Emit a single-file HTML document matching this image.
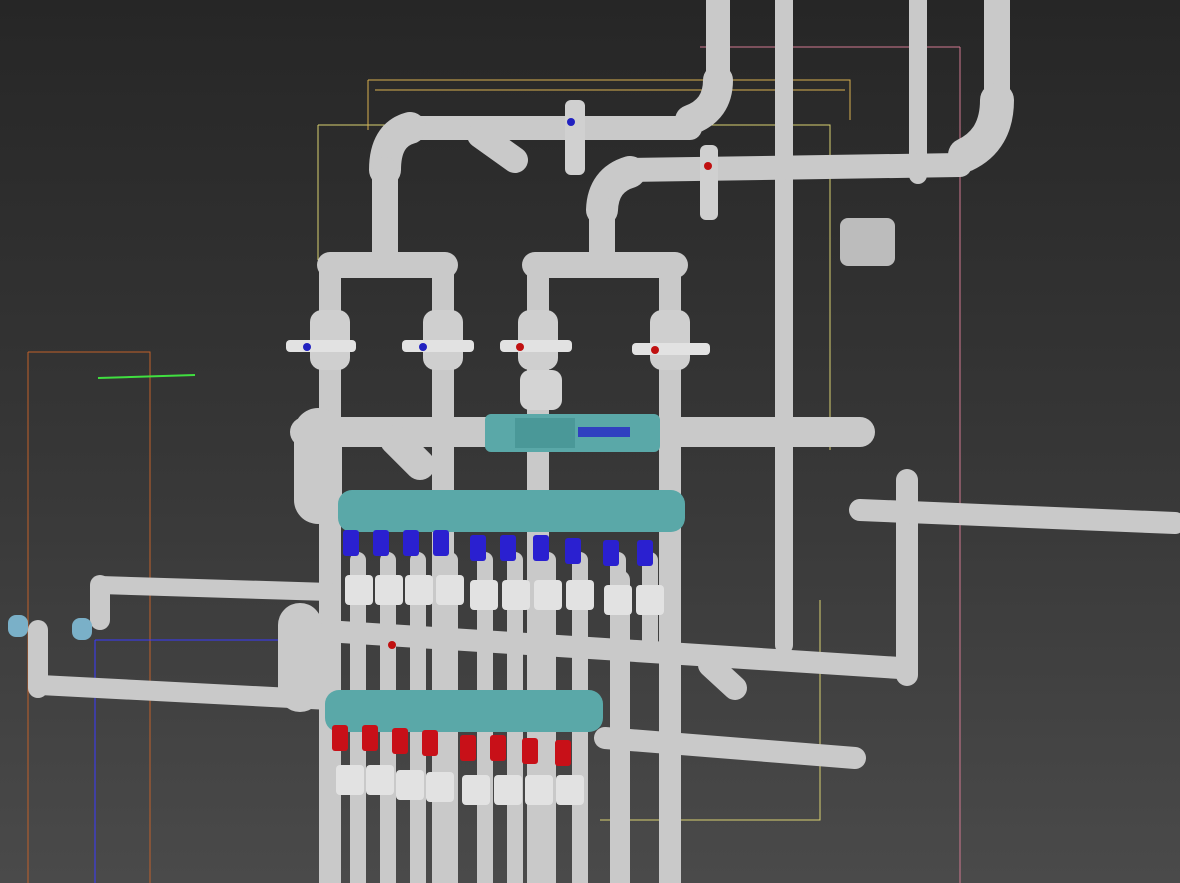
<!DOCTYPE html>
<html><head><meta charset="utf-8"><style>
html,body{margin:0;padding:0;width:1180px;height:883px;overflow:hidden;background:#333}
svg{display:block}
</style></head><body>
<svg width="1180" height="883" viewBox="0 0 1180 883" xmlns="http://www.w3.org/2000/svg">
<defs>
<linearGradient id="bg" x1="0" y1="0" x2="0" y2="1">
<stop offset="0" stop-color="#262626"/><stop offset="0.5" stop-color="#363636"/><stop offset="1" stop-color="#4a4a4a"/>
</linearGradient>
</defs>
<rect width="1180" height="883" fill="url(#bg)"/>
<g fill="none" stroke-width="1">
<path d="M28 352 H150 V883 M28 352 V883" stroke="#c0602a"/>
<path d="M95 640 V883 M95 640 H330" stroke="#3a3aff"/>
<path d="M318 125 H830 V450 M318 125 V260" stroke="#d8d070"/>
<path d="M368 80 H850 V120 M368 80 V130 M375 90 H845" stroke="#d8b050"/>
<path d="M960 47 V883 M700 47 H960" stroke="#d07890"/>
<path d="M600 820 H820 V700 M820 600 V720" stroke="#d8d070"/>
<path d="M98 378 L195 375" stroke="#40e040" stroke-width="2"/>
</g>
<g stroke="#c9c9c9" stroke-linecap="round" fill="none">
<line x1="718" y1="0" x2="718" y2="80" stroke-width="24"/>
<line x1="784" y1="0" x2="784" y2="645" stroke-width="18"/>
<line x1="918" y1="0" x2="918" y2="175" stroke-width="18"/>
<line x1="997" y1="0" x2="997" y2="100" stroke-width="26"/>
<path d="M718 80 Q718 110 690 120" stroke-width="30"/>
<path d="M997 100 Q997 140 965 155" stroke-width="34"/>
<line x1="410" y1="128" x2="690" y2="128" stroke-width="24"/>
<line x1="630" y1="170" x2="960" y2="165" stroke-width="24"/>
<path d="M410 128 Q385 135 385 170" stroke-width="32"/>
<path d="M630 172 Q603 180 602 210" stroke-width="32"/>
<line x1="385" y1="170" x2="385" y2="260" stroke-width="26"/>
<line x1="602" y1="210" x2="602" y2="255" stroke-width="26"/>
<line x1="480" y1="135" x2="515" y2="160" stroke-width="26"/>
<line x1="330" y1="265" x2="445" y2="265" stroke-width="26"/>
<line x1="535" y1="265" x2="675" y2="265" stroke-width="26"/>
<line x1="330" y1="265" x2="330" y2="883" stroke-width="22"/>
<line x1="443" y1="265" x2="443" y2="883" stroke-width="22"/>
<line x1="538" y1="265" x2="538" y2="883" stroke-width="22"/>
<line x1="670" y1="265" x2="670" y2="883" stroke-width="22"/>
<line x1="620" y1="580" x2="620" y2="883" stroke-width="20"/>
<rect x="310" y="310" width="40" height="60" rx="12" fill="#cfcfcf" stroke="none"/>
<rect x="423" y="310" width="40" height="60" rx="12" fill="#cfcfcf" stroke="none"/>
<rect x="518" y="310" width="40" height="60" rx="12" fill="#cfcfcf" stroke="none"/>
<rect x="650" y="310" width="40" height="60" rx="12" fill="#cfcfcf" stroke="none"/>
<line x1="305" y1="432" x2="860" y2="432" stroke-width="30"/>
<line x1="395" y1="440" x2="420" y2="465" stroke-width="30"/>
<line x1="710" y1="665" x2="735" y2="688" stroke-width="24"/>
<path d="M318 432 V500" stroke-width="48"/>
<line x1="100" y1="585" x2="330" y2="592" stroke-width="18"/>
<line x1="100" y1="585" x2="100" y2="620" stroke-width="20"/>
<line x1="40" y1="685" x2="330" y2="700" stroke-width="20"/>
<line x1="38" y1="630" x2="38" y2="688" stroke-width="20"/>
<line x1="310" y1="630" x2="900" y2="668" stroke-width="22"/>
<line x1="907" y1="480" x2="907" y2="675" stroke-width="22"/>
<line x1="860" y1="510" x2="1175" y2="523" stroke-width="22"/>
<line x1="605" y1="738" x2="855" y2="758" stroke-width="22"/>
<path d="M300 625 V690" stroke-width="44"/>
<g stroke-width="16">
<line x1="358" y1="560" x2="358" y2="883"/><line x1="388" y1="560" x2="388" y2="883"/>
<line x1="418" y1="560" x2="418" y2="883"/><line x1="450" y1="560" x2="450" y2="883"/>
<line x1="485" y1="560" x2="485" y2="883"/><line x1="515" y1="560" x2="515" y2="883"/>
<line x1="548" y1="560" x2="548" y2="883"/><line x1="580" y1="560" x2="580" y2="883"/>
<line x1="618" y1="560" x2="618" y2="883"/><line x1="650" y1="560" x2="650" y2="650"/>
</g>
</g>
<g fill="#e2e2e2">
<rect x="345" y="575" width="28" height="30" rx="4"/><rect x="375" y="575" width="28" height="30" rx="4"/>
<rect x="405" y="575" width="28" height="30" rx="4"/><rect x="436" y="575" width="28" height="30" rx="4"/>
<rect x="470" y="580" width="28" height="30" rx="4"/><rect x="502" y="580" width="28" height="30" rx="4"/>
<rect x="534" y="580" width="28" height="30" rx="4"/><rect x="566" y="580" width="28" height="30" rx="4"/>
<rect x="604" y="585" width="28" height="30" rx="4"/><rect x="636" y="585" width="28" height="30" rx="4"/>
<rect x="336" y="765" width="28" height="30" rx="4"/><rect x="366" y="765" width="28" height="30" rx="4"/>
<rect x="396" y="770" width="28" height="30" rx="4"/><rect x="426" y="772" width="28" height="30" rx="4"/>
<rect x="462" y="775" width="28" height="30" rx="4"/><rect x="494" y="775" width="28" height="30" rx="4"/>
<rect x="525" y="775" width="28" height="30" rx="4"/><rect x="556" y="775" width="28" height="30" rx="4"/>
<rect x="286" y="340" width="70" height="12" rx="4"/><rect x="402" y="340" width="72" height="12" rx="4"/>
<rect x="500" y="340" width="72" height="12" rx="4"/><rect x="632" y="343" width="78" height="12" rx="4"/>
<rect x="520" y="370" width="42" height="40" rx="10" fill="#d4d4d4"/>
<rect x="840" y="218" width="55" height="48" rx="8" fill="#bcbcbc"/>
<rect x="565" y="100" width="20" height="75" rx="6" fill="#d0d0d0"/>
<rect x="700" y="145" width="18" height="75" rx="6" fill="#d0d0d0"/>
</g>
<g fill="#5aa8a8">
<rect x="485" y="414" width="175" height="38" rx="6"/>
<rect x="338" y="490" width="347" height="42" rx="14"/>
<rect x="325" y="690" width="278" height="42" rx="14"/>
<rect x="8" y="615" width="20" height="22" rx="8" fill="#7ab0c8"/>
<rect x="72" y="618" width="20" height="22" rx="8" fill="#7ab0c8"/>
</g>
<rect x="515" y="418" width="60" height="30" fill="#4a9898"/>
<rect x="578" y="427" width="52" height="10" fill="#3040c0"/>
<g fill="#2a20d0">
<rect x="343" y="530" width="16" height="26" rx="3"/><rect x="373" y="530" width="16" height="26" rx="3"/>
<rect x="403" y="530" width="16" height="26" rx="3"/><rect x="433" y="530" width="16" height="26" rx="3"/>
<rect x="470" y="535" width="16" height="26" rx="3"/><rect x="500" y="535" width="16" height="26" rx="3"/>
<rect x="533" y="535" width="16" height="26" rx="3"/><rect x="565" y="538" width="16" height="26" rx="3"/>
<rect x="603" y="540" width="16" height="26" rx="3"/><rect x="637" y="540" width="16" height="26" rx="3"/>
</g>
<g fill="#c81018">
<rect x="332" y="725" width="16" height="26" rx="3"/><rect x="362" y="725" width="16" height="26" rx="3"/>
<rect x="392" y="728" width="16" height="26" rx="3"/><rect x="422" y="730" width="16" height="26" rx="3"/>
<rect x="460" y="735" width="16" height="26" rx="3"/><rect x="490" y="735" width="16" height="26" rx="3"/>
<rect x="522" y="738" width="16" height="26" rx="3"/><rect x="555" y="740" width="16" height="26" rx="3"/>
</g>
<g>
<circle cx="307" cy="347" r="4" fill="#2020c0"/><circle cx="423" cy="347" r="4" fill="#2020c0"/>
<circle cx="520" cy="347" r="4" fill="#c01010"/><circle cx="655" cy="350" r="4" fill="#c01010"/>
<circle cx="571" cy="122" r="4" fill="#2020c0"/><circle cx="708" cy="166" r="4" fill="#c01010"/>
<circle cx="392" cy="645" r="4" fill="#c01010"/>
</g>
</svg>
</body></html>
